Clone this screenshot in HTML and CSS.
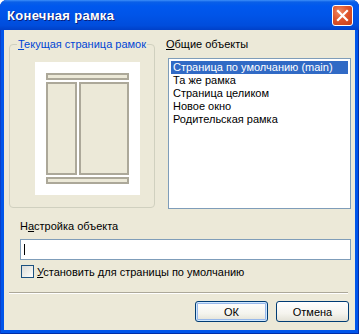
FILE: index.html
```html
<!DOCTYPE html>
<html lang="ru">
<head>
  <meta charset="UTF-8" />
  <title>Конечная рамка</title>
  <link rel="stylesheet" href="styles.css">
</head>
<body>

  <!-- Окно диалога -->
  <div class="window">
    <div class="titlebar">
      <span class="title">Конечная рамка</span>
      <span class="close-btn">
        <svg width="13" height="13" viewBox="0 0 13 13">
          <path d="M2 2 L11 11 M11 2 L2 11" stroke="#fff" stroke-width="2.2" stroke-linecap="square"/>
        </svg>
      </span>
    </div>

    <div class="client">
      <div class="top-row">
        <fieldset class="group">
          <legend><u>Т</u>екущая страница рамок</legend>
          <div class="preview">
            <div class="pv-bar"></div>
            <div class="pv-cols">
              <div class="pv-col pv-left"></div>
              <div class="pv-col pv-right"></div>
            </div>
            <div class="pv-bar"></div>
          </div>
        </fieldset>

        <div class="objects">
          <div class="label"><u>О</u>бщие объекты</div>
          <ul class="listbox">
            <li class="selected">Страница по умолчанию (main)</li>
            <li>Та же рамка</li>
            <li>Страница целиком</li>
            <li>Новое окно</li>
            <li>Родительская рамка</li>
          </ul>
        </div>
      </div>

      <div class="label setting-label">Н<u>а</u>стройка объекта</div>
      <div class="textbox"><span class="caret"></span></div>

      <label class="check-row">
        <span class="checkbox"></span>
        <span><u>У</u>становить для страницы по умолчанию</span>
      </label>

      <div class="separator"></div>

      <div class="buttons">
        <button class="btn btn-default">ОК</button>
        <button class="btn">Отмена</button>
      </div>
    </div>
  </div>

</body>
</html>
```

FILE: styles.css
```css
body {
  margin: 0;
  background-color: #ffffff;
  font-family: "Liberation Sans", Arial, sans-serif;
  font-size: 11px;
  color: #000000;
}

u {
  text-decoration: underline;
  text-underline-offset: 1px;
}

.window {
  width: 359px;
  height: 334px;
  box-sizing: border-box;
  background-color: #0055ea;
  border-radius: 7px 7px 0 0;
  display: flex;
  flex-direction: column;
  padding: 0 4px 4px 4px;
  box-shadow: inset 1px 0 #0a3fc9, inset -1px 0 #002ea8, inset 0 -1px #002ea8;
}

.titlebar {
  height: 30px;
  margin: 0 -4px;
  padding: 0 6px 0 7px;
  display: flex;
  align-items: center;
  justify-content: space-between;
  border-radius: 7px 7px 0 0;
  background: linear-gradient(to bottom, #3d8ff9 0, #0a5fe8 2px, #0058ee 6px, #0054e8 50%, #004ddc 85%, #0040c8 100%);
}

.title {
  color: #ffffff;
  font-weight: bold;
  font-size: 13px;
  letter-spacing: 0.3px;
  text-shadow: 1px 1px 0 #0a1e7a;
  margin-top: 1px;
}

.close-btn {
  width: 21px;
  height: 21px;
  box-sizing: border-box;
  border: 1px solid #ffffff;
  border-radius: 3px;
  background: radial-gradient(circle at 35% 30%, #f08a64 0, #e0552c 45%, #c63d18 100%);
  display: flex;
  align-items: center;
  justify-content: center;
}

.client {
  flex: 1;
  background-color: #ece9d8;
  padding: 8px 4px 0 5px;
  display: flex;
  flex-direction: column;
}

.top-row {
  display: flex;
  gap: 13px;
}

.group {
  margin: 0;
  min-width: 0;
  width: 146px;
  height: 170px;
  box-sizing: border-box;
  border: 1px solid #d0d0bf;
  border-radius: 4px;
  padding: 11px 0 0 0;
}

.group legend {
  color: #0046d5;
  white-space: nowrap;
  padding: 0 1px;
  margin-left: 7px;
  line-height: 13px;
}

.preview {
  width: 105px;
  height: 133px;
  box-sizing: border-box;
  margin-left: 25px;
  background-color: #ffffff;
  padding: 11px;
  display: flex;
  flex-direction: column;
  gap: 2px;
}

.pv-bar,
.pv-col {
  box-sizing: border-box;
  border: 2px solid #aca899;
  background-color: #ece9d8;
}

.pv-bar {
  height: 7px;
}

.pv-cols {
  flex: 1;
  display: flex;
  gap: 2px;
}

.pv-left {
  width: 31px;
}

.pv-right {
  flex: 1;
}

.objects {
  flex: 1;
  display: flex;
  flex-direction: column;
}

.label {
  line-height: 13px;
  margin-left: -2px;
}

.listbox {
  list-style: none;
  margin: 7px 0 0 0;
  padding: 2px;
  height: 151px;
  box-sizing: border-box;
  border: 1px solid #7f9db9;
  background-color: #ffffff;
}

.listbox li {
  height: 13px;
  line-height: 13px;
  padding-left: 2px;
}

.listbox .selected {
  background-color: #316ac5;
  color: #ffffff;
}

.setting-label {
  margin: 11px 0 0 11px;
}

.textbox {
  margin: 6px 0 0 11px;
  width: 331px;
  height: 21px;
  box-sizing: border-box;
  border: 1px solid #7f9db9;
  background-color: #ffffff;
  padding: 4px 0 0 3px;
}

.caret {
  display: block;
  width: 1px;
  height: 11px;
  background-color: #000000;
}

.check-row {
  margin: 5px 0 0 12px;
  display: flex;
  align-items: center;
  gap: 3px;
}

.checkbox {
  width: 13px;
  height: 13px;
  box-sizing: border-box;
  border: 1px solid #1c5180;
  background: linear-gradient(135deg, #dcdcd7 0, #f0f0ec 60%, #ffffff 100%);
}

.separator {
  margin: 14px 3px 0 0;
  height: 1px;
  background-color: #aca899;
  border-bottom: 1px solid #ffffff;
}

.buttons {
  display: flex;
  justify-content: flex-end;
  gap: 8px;
  margin: 7px 2px 0 0;
}

.btn {
  width: 73px;
  height: 21px;
  box-sizing: border-box;
  font-family: inherit;
  font-size: 11px;
  color: #000000;
  border: 1px solid #003c74;
  border-radius: 3px;
  background: linear-gradient(to bottom, #ffffff 0, #f5f4ee 60%, #e3e1d6 100%);
  padding: 0;
}

.btn-default {
  box-shadow: inset 0 0 0 1px #cee7ff, inset 0 0 0 2px #98b8ea;
}
```
